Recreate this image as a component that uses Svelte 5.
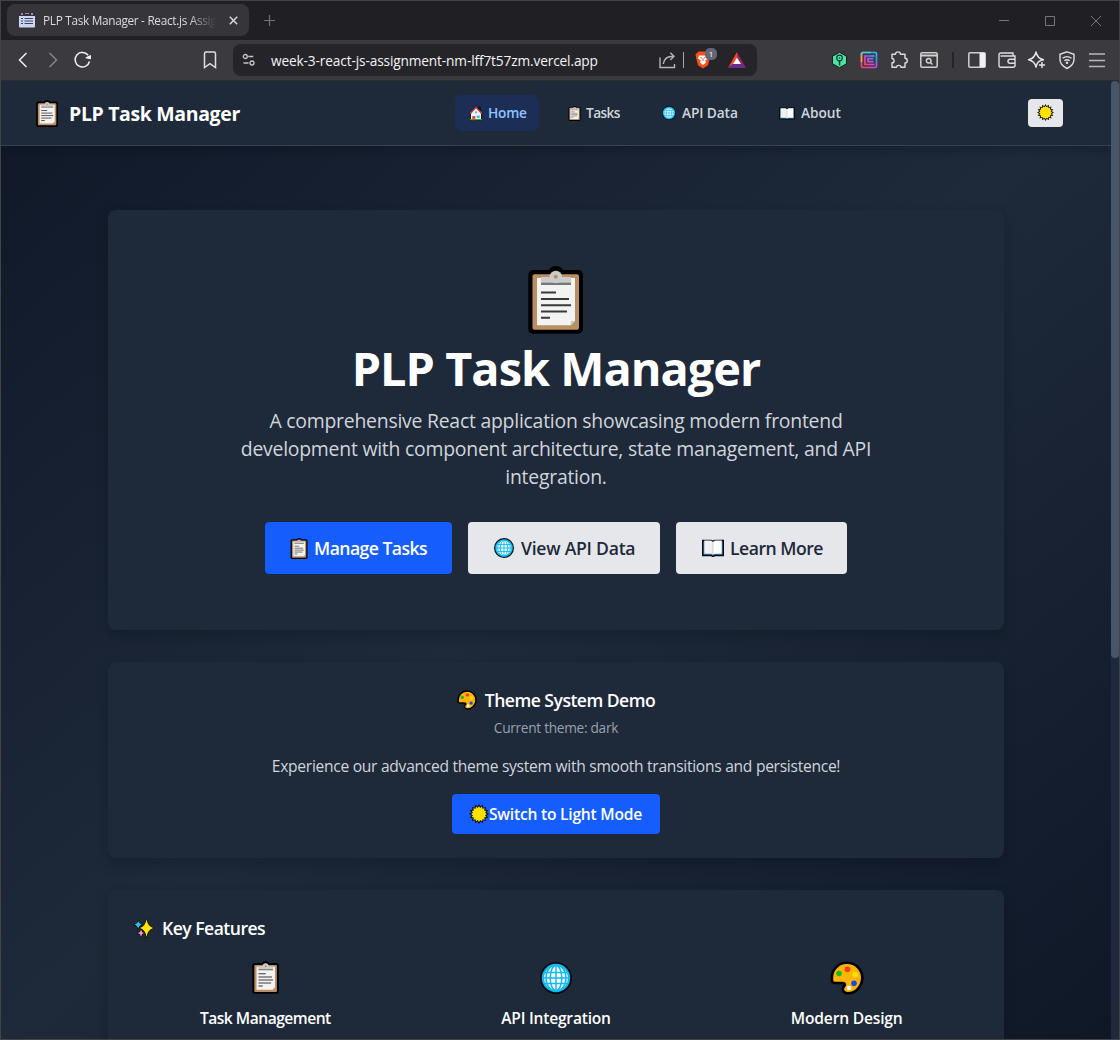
<script>
  const nav = [
    { label: 'Home', icon: 'house', w: 84, ls: -0.2, active: true },
    { label: 'Tasks', icon: 'clipboard', w: 78, ls: -0.6 },
    { label: 'API Data', icon: 'globe', w: 103, ls: -0.1 },
    { label: 'About', icon: 'book', w: 90, ls: -0.05 }
  ];
  const actions = [
    { label: 'Manage Tasks', icon: 'clipboard', w: 187, ls: -0.55, primary: true },
    { label: 'View API Data', icon: 'globe', w: 192, ls: -0.25 },
    { label: 'Learn More', icon: 'book', w: 171, ls: -0.5 }
  ];
  const features = [
    { label: 'Task Management', icon: 'clipboard', ls: -0.5 },
    { label: 'API Integration', icon: 'globe', ls: -0.22 },
    { label: 'Modern Design', icon: 'palette', ls: -0.2 }
  ];

  // Points of a 16-ray sunburst, alternating outer and inner radius
  const burst = (outer, inner) =>
    Array.from({ length: 32 }, (_, i) => {
      const r = i % 2 ? inner : outer;
      const a = (i * Math.PI) / 16;
      return `${(r * Math.cos(a)).toFixed(2)},${(r * Math.sin(a)).toFixed(2)}`;
    }).join(' ');
</script>

{#snippet emoji(name)}
  {#if name === 'clipboard'}
    <svg class="emoji clipboard" viewBox="28 16 55 68">
      <rect x="28.3" y="20" width="54.7" height="63.7" rx="5" fill="#000" />
      <circle cx="55.8" cy="24.5" r="8.5" fill="#000" />
      <rect x="32.5" y="24.3" width="46.5" height="55.5" rx="2" fill="#bb8f62" />
      <path d="M37 28h38v43l-4.300 4.300H37z" fill="#f3f3f3" />
      <path d="M70.700 75.300V71H75z" fill="#c8c8c8" />
      <rect x="41" y="27" width="30" height="8" fill="#cbcbcb" />
      <rect x="41" y="32.700" width="30" height="2.300" fill="#777" />
      <circle cx="55.800" cy="27" r="6.200" fill="#cbcbcb" />
      <circle cx="55.800" cy="26.700" r="2" fill="#bb8f62" />
      <path d="M41 42.500h15M41 49h28M41 55.200h30M41 61.500h26M41 67.700h9" stroke="#3a3a3a" stroke-width="2.100" />
    </svg>
  {:else if name === 'globe'}
    <svg class="emoji globe" viewBox="0 0 32 32">
      <circle cx="16" cy="16" r="16" fill="#05090e" />
      <circle cx="16" cy="16" r="14.200" fill="#10b9f2" />
      <circle cx="16" cy="16" r="11.900" fill="#fff" />
      <g fill="none" stroke="#10b9f2" stroke-width="1.500">
        <path d="M16 3v26M3 16h26M5 10.500h22M5 21.500h22" />
        <ellipse cx="16" cy="16" rx="5.800" ry="12.500" />
        <ellipse cx="16" cy="16" rx="10" ry="13" />
      </g>
    </svg>
  {:else if name === 'palette'}
    <svg class="emoji palette" viewBox="0 0 34 34">
      <path d="M2 19C1 9 8 1.800 17 1.800c9 0 15.300 7 15.300 15S26 32.300 18 32.300c-5 0-6.500-4-4-7 2-2.300.500-3.300-2-3.300H5c-2 0-3-1-3-3z" fill="#fcb408" stroke="#000" stroke-width="2.600" />
      <circle cx="9" cy="12.500" r="2.800" fill="#15bd12" />
      <circle cx="17.500" cy="8.300" r="2.800" fill="#f43a20" />
      <circle cx="25" cy="13.600" r="2.800" fill="#ffe000" />
      <circle cx="24" cy="22.200" r="2.800" fill="#1149e8" />
      <circle cx="19" cy="27" r="2.300" fill="#fff" />
    </svg>
  {:else if name === 'book'}
    <svg class="emoji book" viewBox="0 0 22 18">
      <path d="M.700 1.500H9l2 .700 2-.700h8.300v15H13l-2 .900-2-.900H.700z" fill="#3d7fb3" stroke="#05080d" stroke-width="1.400" />
      <path d="M2.300 1.600H9L11 3v12.500l-1.500-.700H2.300z" fill="#f1f1f1" />
      <path d="M19.700 1.600H13L11 3v12.500l1.500-.700h7.200z" fill="#fff" />
      <path d="M11 3v12.500" stroke="#c4c4c4" stroke-width=".8" />
    </svg>
  {:else if name === 'house'}
    <svg class="emoji house" viewBox="0 0 14 15">
      <path d="M0 7.500 7 0l2 2V.800h3V5l2 2.500-1 1V15H1V8.500z" fill="#10151d" />
      <path d="M1 13h12v1.200H1z" fill="#1faa28" />
      <path d="M2 7.500 7 2l5 5.500V13H2z" fill="#f3f3f6" />
      <path d="m1.200 7.500L7 1.300l5.800 6.200" fill="none" stroke="#e8403d" stroke-width="1.200" />
      <path d="M3.300 10h3v4.200h-3z" fill="#e34b35" />
      <path d="M7.700 9.500h3v2.600h-3zM6 5.200h2v2H6z" fill="#35c4f4" />
    </svg>
  {:else if name === 'sun'}
    <svg class="emoji sun" viewBox="-10 -10 20 20">
      <polygon points={burst(10, 7.6)} fill="#0b0b08" />
      <polygon points={burst(8, 6.2)} fill="#ffe100" />
    </svg>
  {:else if name === 'sparkles'}
    <svg class="emoji sparkles" viewBox="0 0 20 20">
      <g stroke="#000" stroke-width="1.200" stroke-linejoin="round" paint-order="stroke">
        <path d="M12.500 1Q13.500 8.200 19.300 10 13.500 11.800 12.500 19.300 11.500 11.800 6 10 11.500 8.200 12.500 1z" fill="#ffe600" />
        <path d="M4.200 3Q4.800 6 8 6.800 4.800 7.600 4.200 11 3.600 7.600.500 6.800 3.600 6 4.200 3z" fill="#28c0f3" />
        <path d="M7 11.500Q7.600 14.300 10 15 7.600 15.700 7 19 6.400 15.700 3.700 15 6.400 14.300 7 11.500z" fill="#f490b4" />
      </g>
    </svg>
  {/if}
{/snippet}

<div class="window">
  <div class="tabs">
    <div class="tab">
      <svg class="favicon" viewBox="0 0 16 16">
        <rect x="0" y="1" width="16" height="14.500" rx="1" fill="#cdd5ef" />
        <path d="M0 0h16v4H0z" fill="#3a2d3c" /><path d="M2 1h2v2H2zM6 1h4v1H6zM12 1h2v2h-2z" fill="#8c93b4" />
        <path d="M2 6.500h2M5.500 6.500H14M2 9h2M5.500 9H14M2 11.500h2M5.500 11.500H14" stroke="#3b4468" stroke-width="1.100" />
      </svg>
      <span class="tab-title">PLP Task Manager - React.js Assig</span>
      <svg class="x" viewBox="0 0 9 9"><path d="m.8.8 7.400 7.400M8.200.8.800 8.200" stroke="#d8d8da" stroke-width="1.500" /></svg>
    </div>
    <svg class="plus" viewBox="0 0 11 11"><path d="M5.500 0v11M0 5.500h11" stroke="#6f6f74" stroke-width="1.200" /></svg>
    <div class="controls">
      <svg viewBox="0 0 12 12"><path d="M1 5.500h10" stroke="#77777b" /></svg>
      <svg viewBox="0 0 12 12"><path d="M1.500 1.500h9v9h-9z" fill="none" stroke="#77777b" /></svg>
      <svg viewBox="0 0 12 12"><path d="m1 1 10 10M11 1 1 11" stroke="#77777b" /></svg>
    </div>
  </div>

  <div class="toolbar">
    <div class="history">
      <svg viewBox="0 0 20 20"><path d="m13.500 3-7 7 7 7" stroke="#f1f1f2" stroke-width="1.500" fill="none" /></svg>
      <svg viewBox="0 0 20 20"><path d="m6.500 3 7 7-7 7" stroke="#858589" stroke-width="1.500" fill="none" /></svg>
      <svg viewBox="0 0 20 20"><path d="M15.200 5.200A7.300 7.300 0 1 0 16.500 11.500" stroke="#f1f1f2" stroke-width="1.500" fill="none" /><path d="M12.800 7.800 17.500 5.500v3.300z" fill="#f1f1f2" stroke="#f1f1f2" stroke-linejoin="round" /></svg>
    </div>
    <svg class="bookmark" viewBox="0 0 14 18"><path d="M1.500 16.500V2.500q0-1.500 1.500-1.500h8q1.500 0 1.500 1.500v14L7 12.700z" fill="none" stroke="#dededf" stroke-width="1.500" /></svg>
    <div class="address">
      <svg class="tune" viewBox="0 0 14 14" fill="none" stroke="#c5c5c8" stroke-width="1.300"><circle cx="3.300" cy="3.500" r="2" /><path d="M6.300 3.500h5M1.500 10h5" /><circle cx="10" cy="10" r="2" /></svg>
      <span class="url">week-3-react-js-assignment-nm-lff7t57zm.vercel.app</span>
      <svg class="share" viewBox="0 0 17 17" fill="none" stroke="#b6b6b9" stroke-width="1.400"><path d="M1 5.500v10h14.500V12M4.300 12c.5-5 4-7.800 10.200-7.800M11.300.8l3.700 3.500L11.300 8" /></svg>
      <i class="bar"></i>
      <div class="brave">
        <svg viewBox="0 0 16 18"><path d="M3.500.5h9l3 3-.7 3.700-1.800 7L8 17.500l-5-3.300-1.800-7L.5 3.500z" fill="#f6511d" /><path d="M4 4.500h8l1 3-2.800 2 .8 2-3 2.500-3-2.500.8-2-2.800-2z" fill="#fff" /><path d="m5.500 6.500 1.500.5M10.500 6.500 9 7M8 7v3" stroke="#f6511d" /></svg>
        <span class="badge">1</span>
      </div>
      <svg class="bat" viewBox="0 0 18 16"><path d="M9 0v5.500L5.300 12 0 16z" fill="#ff4724" /><path d="m9 0 9 16-5-4L9 5.500z" fill="#9e1f63" /><path d="M0 16h18l-4.700-4H4.700z" fill="#662d91" /><path d="m9 5.500 4 6.500H5z" fill="#fff" /></svg>
    </div>
    <div class="extensions">
      <svg viewBox="0 0 20 20"><path d="m10.500 2.300 7 3.900v7.600l-7 3.900-7-3.900V6.200z" fill="#4be3a4" stroke="#111c18" /><circle cx="10.500" cy="8" r="2.800" fill="none" stroke="#11352a" stroke-width="1.200" /><circle cx="10.500" cy="8" r=".8" fill="#11352a" /><path d="M9.800 11h1.500v4.500H9.800z" fill="#11352a" /></svg>
      <svg viewBox="0 0 20 20" fill="none" stroke-width="1.700">
        <defs><linearGradient id="rainbow" x1="0" y1="1" x2="1" y2="0"><stop offset="0" stop-color="#ff4265" /><stop offset=".5" stop-color="#c44bf0" /><stop offset=".75" stop-color="#5b7cff" /><stop offset="1" stop-color="#25c8fa" /></linearGradient></defs>
        <rect x="2.500" y="2.500" width="15" height="15" rx="1.500" stroke="url(#rainbow)" /><path d="M15.500 6H6v8.500h9.500M14.500 8.700H9v3h5.500" stroke="url(#rainbow)" /><path d="M2.500 12V3.500" stroke="#ff9a2e" /><path d="M2.500 4.500v-1l1-1H12" stroke="#35dcc5" />
      </svg>
      <svg viewBox="0 0 20 20" fill="none" stroke="#dedee0" stroke-width="1.400"><path d="M3 4.300h3.500C6.300 1 11.500 1 11.500 4.300H16v4c3 0 3 4.700 0 4.700v4.300h-4c0-2.600-4.500-2.600-4.500 0H3v-4.500c2.800 0 2.800-4.300 0-4.300z" stroke-linejoin="round" /></svg>
      <svg viewBox="0 0 20 20" fill="none" stroke="#d0d0d2" stroke-width="1.500"><rect x="1.800" y="2.800" width="16.400" height="14.500" rx="1.200" /><path d="M2 5.500h16" stroke-width="2" /><circle cx="9.700" cy="10.800" r="2.300" /><path d="m11.400 12.500 2 2" /></svg>
      <i class="sep"></i>
      <svg viewBox="0 0 20 20"><rect x="1.800" y="2.800" width="16.400" height="14.500" rx="1.200" fill="none" stroke="#d0d0d2" stroke-width="1.500" /><path d="M12.500 3h5.500v14h-5.500z" fill="#f1f1f3" /></svg>
      <svg viewBox="0 0 20 20" fill="none" stroke="#dedee0" stroke-width="1.400"><path d="M16 6V3H4Q2 3 2 5v10.500Q2 17.300 4 17.300h12q2 0 2-2V6H3.500" /><path d="M18 9.200h-5q-2 0-2 2t2 2h5" /></svg>
      <svg viewBox="0 0 20 20" fill="none" stroke="#e8e8ea" stroke-width="1.400"><path d="M9 2q1.300 6.500 7.500 7.700-3.500.6-5.200 2.300Q9.700 13.700 9 17.200 7.800 11 1.500 9.700 7.800 8.300 9 2zM15 12v6M12 15h6" stroke-linejoin="round" /></svg>
      <svg viewBox="0 0 20 20" fill="none" stroke="#dedee0" stroke-width="1.400"><path d="m10 1.800 7 2.500v5.200c0 4.500-3 7-7 9-4-2-7-4.500-7-9V4.300z" /><path d="M5.500 8.300q4.500-3.300 9 0M7.300 10.800q2.700-2 5.400 0" /><circle cx="10" cy="12.800" r=".6" /></svg>
      <svg viewBox="0 0 20 20"><path d="M2 4h16M2 10.500h16M2 16.500h16" stroke="#b9b9bb" stroke-width="1.600" /></svg>
    </div>
  </div>

  <div class="viewport">
    <div class="page">
      <header>
        <div class="brand">{@render emoji('clipboard')}<span>PLP Task Manager</span></div>
        <nav>
          {#each nav as item}
            <a class:active={item.active} style:width="{item.w}px" style:letter-spacing="{item.ls}px">{@render emoji(item.icon)}<span>{item.label}</span></a>
          {/each}
        </nav>
        <button class="toggle" aria-label="Toggle theme">{@render emoji('sun')}</button>
      </header>

      <main>
        <section class="card hero">
          {@render emoji('clipboard')}
          <h1>PLP Task Manager</h1>
          <p>A comprehensive React application showcasing modern frontend<br />development with component architecture, state management, and API<br />integration.</p>
          <div class="actions">
            {#each actions as item}
              <button class:primary={item.primary} style:width="{item.w}px" style:letter-spacing="{item.ls}px">{@render emoji(item.icon)}<span>{item.label}</span></button>
            {/each}
          </div>
        </section>

        <section class="card theme">
          <h2>{@render emoji('palette')}<span>Theme System Demo</span></h2>
          <small>Current theme: dark</small>
          <p>Experience our advanced theme system with smooth transitions and persistence!</p>
          <button class="primary">{@render emoji('sun')}<span>Switch to Light Mode</span></button>
        </section>

        <section class="card features">
          <h2>{@render emoji('sparkles')}<span>Key Features</span></h2>
          <div class="grid">
            {#each features as item}
              <div class="feature">
                <div class="pic">{@render emoji(item.icon)}</div>
                <h3 style:letter-spacing="{item.ls}px">{item.label}</h3>
              </div>
            {/each}
          </div>
        </section>
      </main>
    </div>
    <div class="scrollbar"><div class="thumb"></div></div>
  </div>
</div>

<style>
  :global(body) { background: #202024; overflow: hidden; }
  svg { display: block; flex: none; }
  .window { box-sizing: border-box; width: 1120px; height: 1040px; border: 1px solid #444346; display: flex; flex-direction: column; overflow: hidden; font-family: "Open Sans", "Noto Sans", sans-serif; }
  .window * { box-sizing: border-box; }
  span { white-space: nowrap; }

  .tabs { height: 39px; background: #201f24; display: flex; align-items: center; padding-left: 6px; }
  .tab { width: 242px; height: 32px; border-radius: 8px; background: #363539; display: flex; align-items: center; padding: 0 11px 0 12px; margin-top: -1px; }
  .favicon { width: 16px; height: 16px; margin-right: 8px; }
  .tab-title { font-size: 11.8px; letter-spacing: -0.3px; color: #dcdcde; mask-image: linear-gradient(90deg, #000 84%, transparent 100%); }
  .x { width: 9px; height: 9px; margin-left: auto; }
  .plus { width: 11px; height: 11px; margin-left: 15px; }
  .controls { margin-left: auto; display: flex; gap: 34px; padding-right: 17px; }
  .controls svg { width: 12px; height: 12px; }

  .toolbar { height: 41px; background: #3b3a3e; border-bottom: 1px solid #2b2d33; display: flex; align-items: center; }
  .history { display: flex; gap: 10px; margin-left: 12px; }
  .history svg { width: 20px; height: 20px; }
  .bookmark { width: 14px; height: 18px; margin-left: 110px; }
  .address { width: 524px; height: 32px; margin-left: 16px; background: #252429; border-radius: 8px; display: flex; align-items: center; padding: 0 11px 0 9px; }
  .tune { width: 14px; height: 14px; }
  .url { margin-left: 15px; font-size: 13.7px; letter-spacing: -0.14px; color: #f4f4f5; }
  .share { width: 17px; height: 17px; margin-left: auto; }
  .bar { width: 1px; height: 16px; background: #a6a6a9; margin-left: 7px; }
  .brave { position: relative; margin-left: 11px; }
  .brave svg { width: 16px; height: 18px; }
  .badge { position: absolute; left: 10px; top: -3px; width: 12px; height: 12px; border-radius: 5px; background: #626675; color: #fff; font-size: 8px; line-height: 12px; text-align: center; }
  .bat { width: 18px; height: 16px; margin-left: 17px; }
  .extensions { margin-left: auto; padding-right: 12px; display: flex; align-items: center; gap: 10px; }
  .extensions svg { width: 20px; height: 20px; }
  .sep { width: 2px; height: 16px; background: #252429; margin: 0 3px; }

  .viewport { flex: 1; min-height: 0; display: flex; }
  .page { width: 1110px; height: 958px; overflow: hidden; background: linear-gradient(to bottom right, #101828 0%, #1e2939 50%, #101828 100%); }
  header { position: relative; height: 65px; background: #1e2939; border-bottom: 1px solid #364153; box-shadow: 0 4px 8px #0003; display: grid; grid-template-columns: 420px 1fr 83px; align-items: center; }
  .brand { display: flex; align-items: center; padding-left: 35px; color: #fff; font-weight: 700; font-size: 19.5px; letter-spacing: -0.36px; }
  .brand .clipboard { width: 22px; height: 27px; margin-right: 11px; }
  nav { display: flex; gap: 15px; padding-left: 34px; }
  nav a { height: 36px; border-radius: 6px; display: flex; align-items: center; padding-left: 14px; font-size: 13.7px; font-weight: 650; color: #d1d5dc; }
  nav a span { margin-top: -1px; }
  nav a.active { background: #1c2e55; color: #8ec5ff; }
  nav .house { width: 14px; height: 15px; margin-right: 5px; }
  nav .clipboard { width: 13px; height: 15px; margin-right: 5px; }
  nav .globe { width: 14px; height: 14px; margin: 0 6px 0 1px; }
  nav .book { width: 16px; height: 13px; margin-right: 6px; }
  button { border: 0; padding: 0; border-radius: 4px; font-family: inherit; display: flex; align-items: center; }
  .toggle { width: 35px; height: 28px; background: #e5e7eb; justify-content: center; margin-top: -1px; justify-self: start; }
  .toggle .sun { width: 17px; height: 17px; }

  main { padding: 64px 107px 0; display: flex; flex-direction: column; gap: 32px; }
  .card { background: #1e2939; border-radius: 8px; box-shadow: 0 6px 14px #0000002e; display: flex; flex-direction: column; align-items: center; }
  h1, h2, h3, p { margin: 0; }
  .hero { height: 420px; padding-top: 56px; }
  .hero > .clipboard { width: 55px; height: 68px; margin-right: 1px; }
  h1 { margin-top: 10px; font-size: 46.8px; line-height: 48px; letter-spacing: -0.95px; color: #fff; }
  .hero p { margin-top: 15px; font-size: 19.4px; line-height: 28px; letter-spacing: -0.235px; text-align: center; color: #d1d5dc; }
  .actions { display: flex; gap: 16px; margin-top: 31px; }
  .actions button { height: 52px; padding-left: 25px; background: #e5e7eb; color: #1e2939; font-size: 17.6px; font-weight: 640; }
  .actions .clipboard { width: 18px; height: 21px; margin-right: 6px; }
  .actions .globe { width: 20px; height: 20px; margin: 0 7px 0 1px; }
  .actions .book { width: 22px; height: 18px; margin: 0 6px 0 1px; }
  .actions button.primary, .theme .primary { background: #155dfc; color: #fff; }

  .theme { height: 196px; padding-top: 24px; }
  h2 { display: flex; align-items: center; font-size: 17.6px; line-height: 28px; font-weight: 650; letter-spacing: -0.53px; color: #fff; }
  h2 .palette { width: 20px; height: 20px; margin-right: 8px; }
  .theme small { font-size: 13.7px; line-height: 20px; margin-top: 4px; letter-spacing: -0.3px; color: #99a1af; }
  .theme p { margin-top: 16px; font-size: 15.6px; line-height: 24px; letter-spacing: -0.28px; color: #d1d5dc; }
  .theme .primary { margin-top: 16px; width: 208px; height: 40px; padding-left: 17px; font-size: 15.6px; font-weight: 650; letter-spacing: -0.22px; }
  .theme .sun { width: 20px; height: 20px; }

  .features { height: 280px; padding: 24px 24px 0; align-items: stretch; }
  .features h2 { padding-left: 2px; }
  .sparkles { width: 20px; height: 20px; margin-right: 8px; }
  .grid { display: grid; grid-template-columns: repeat(3, 1fr); column-gap: 24px; margin-top: 16px; }
  .feature { display: flex; flex-direction: column; align-items: center; }
  .pic { height: 39px; display: flex; align-items: center; }
  .pic .clipboard { width: 27px; height: 33px; }
  .pic .globe { width: 32px; height: 32px; }
  .pic .palette { width: 34px; height: 34px; }
  h3 { margin-top: 9px; font-size: 15.6px; line-height: 24px; font-weight: 650; color: #fff; }

  .scrollbar { width: 8px; background: #1e293b; }
  .thumb { height: 577px; border-radius: 4px; background: #475569; }
</style>
